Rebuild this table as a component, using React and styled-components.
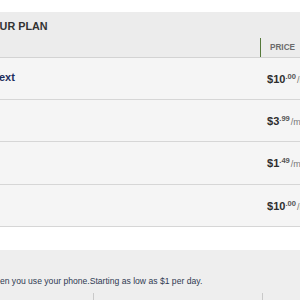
import styled, { createGlobalStyle } from "styled-components";

const Global = createGlobalStyle`
  html, body {
    margin: 0;
    padding: 0;
    background: #fff;
    overflow: hidden;
  }
  body {
    font-family: "Liberation Sans", Arial, sans-serif;
  }
`;

const Page = styled.div`
  width: 340px;
  margin-left: -20px;
  padding-top: 12px;
`;

const Header = styled.div`
  background: #ececec;
  border-bottom: 1px solid #d3d3d3;
`;

const Title = styled.h2`
  margin: 0;
  height: 25px;
  padding: 3px 0 0 4px;
  box-sizing: border-box;
  display: flex;
  align-items: center;
  font-size: 10.8px;
  font-weight: bold;
  color: #333;
`;

const ColumnRow = styled.div`
  display: grid;
  grid-template-columns: 1fr 60px;
  height: 20px;
`;

const ColumnHead = styled.div`
  display: flex;
  align-items: center;
  padding-left: 9px;
  font-size: 8.2px;
  font-weight: bold;
  color: #6b6b6b;
  border-left: 1px solid ${(p) => (p.$divider ? "#55793a" : "transparent")};
  margin-top: 1px;
`;

const Row = styled.div`
  display: grid;
  grid-template-columns: 1fr 60px;
  align-items: center;
  height: ${(p) => p.$h || 41}px;
  background: #f5f5f5;
  border-bottom: 1px solid #d6d6d6;
`;

const Label = styled.div`
  padding-left: 13px;
  font-size: 11px;
  font-weight: bold;
  color: #1d2e5c;
  margin-top: -4px;
`;

const Price = styled.div`
  padding-left: 7px;
  white-space: nowrap;
  color: #2e2e2e;
  font-weight: bold;
  font-size: 11px;
  margin-top: -1px;
`;

const Cents = styled.sup`
  font-size: 7.6px;
  color: #555;
  vertical-align: 4px;
`;

const Per = styled.span`
  font-size: 9px;
  font-weight: normal;
  color: #777;
  margin-left: 1px;
`;

const Gap = styled.div`
  height: 23px;
`;

const Footer = styled.div`
  background: #eeeeee;
  padding-top: 26px;
`;

const Note = styled.p`
  margin: 0;
  padding-left: 7px;
  font-size: 8.6px;
  color: #2f3a52;
  line-height: 11px;
`;

const Columns = styled.div`
  display: grid;
  grid-template-columns: 114px 169px 1fr;
  margin-top: 6px;
  height: 20px;
`;

const Col = styled.div`
  border-right: 1px solid ${(p) => (p.$line ? "#c9c9c9" : "transparent")};
`;

const plans = [
  { label: "Text", dollars: "10", cents: "00" },
  { label: "", dollars: "3", cents: "99" },
  { label: "", dollars: "1", cents: "49", h: 42 },
  { label: "", dollars: "10", cents: "00" },
];

export default function App() {
  return (
    <>
      <Global />
      <Page>
        <Header>
          <Title>YOUR PLAN</Title>
          <ColumnRow>
            <ColumnHead />
            <ColumnHead $divider>PRICE</ColumnHead>
          </ColumnRow>
        </Header>
        {plans.map((p, i) => (
          <Row key={i} $h={p.h}>
            <Label>{p.label}</Label>
            <Price>
              ${p.dollars}
              <Cents>.{p.cents}</Cents>
              <Per>/mo</Per>
            </Price>
          </Row>
        ))}
        <Gap />
        <Footer>
          <Note>When you use your phone.Starting as low as $1 per day.</Note>
          <Columns>
            <Col $line />
            <Col $line />
            <Col />
          </Columns>
        </Footer>
      </Page>
    </>
  );
}
